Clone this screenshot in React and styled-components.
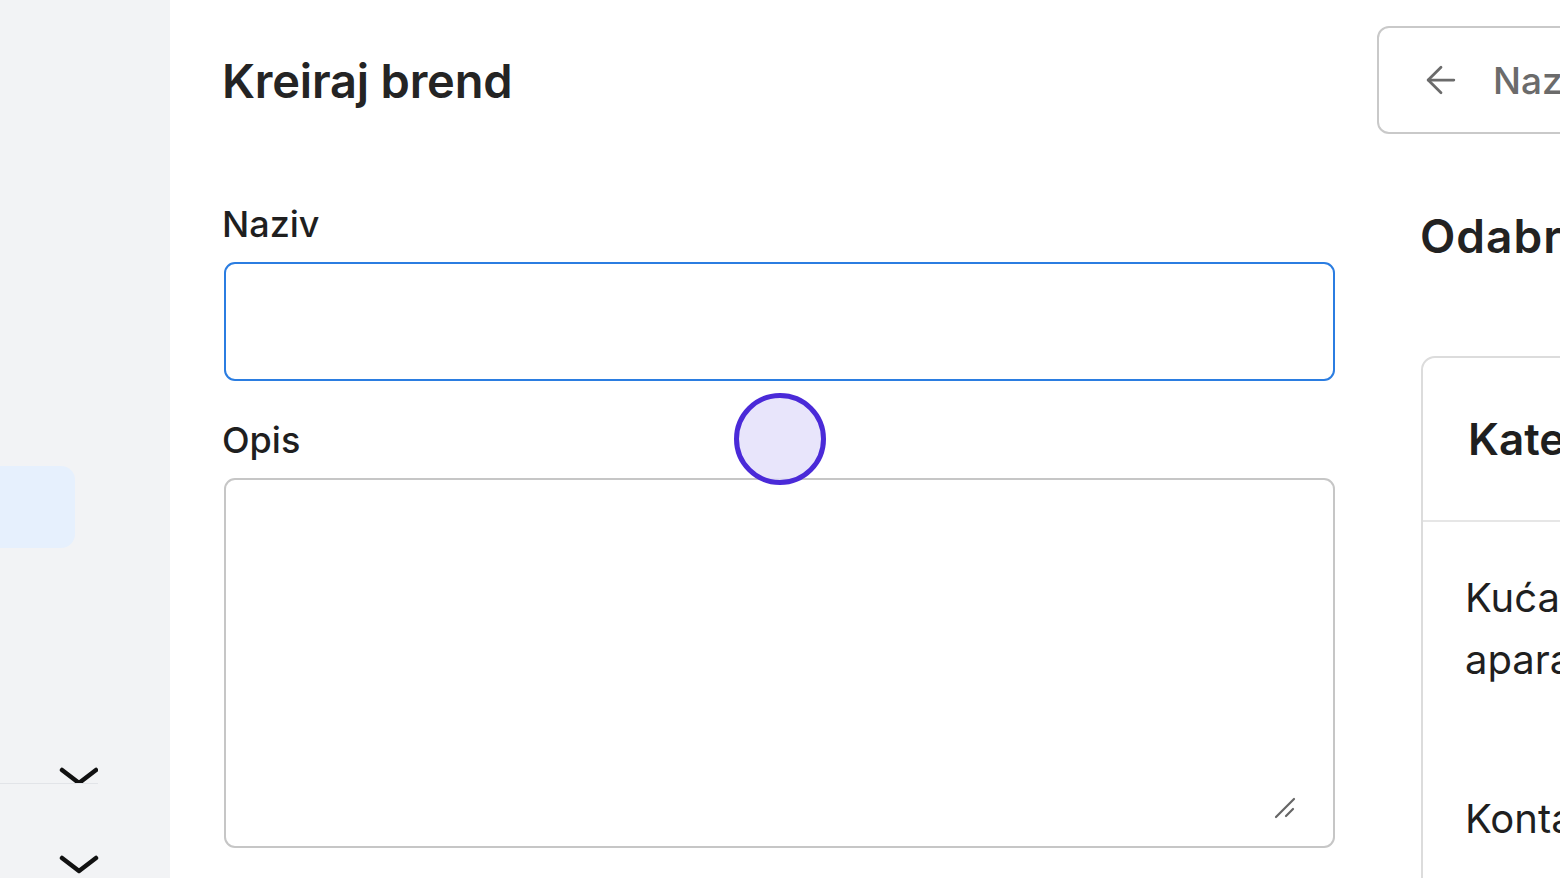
import React from "react";
import styled, { createGlobalStyle } from "styled-components";
import { ArrowLeft } from "lucide-react";

const GlobalStyle = createGlobalStyle`
  html, body {
    margin: 0;
    padding: 0;
    background: #ffffff;
    font-family: Inter, "Noto Sans", "Liberation Sans", sans-serif;
    color: #222222;
  }
  * {
    box-sizing: border-box;
  }
`;

const categories = ["Kućanski aparati", "Kontakt leće"];

const Chevron = () => (
  <svg width="40" height="20" viewBox="0 0 40 20" fill="none">
    <path d="M3 3 L20 16 L37 3" stroke="#111" strokeWidth="4.5" strokeLinecap="round" strokeLinejoin="round" />
  </svg>
);

const App = () => {
  return (
    <>
      <GlobalStyle />
      <Layout>
        <Sidebar>
          <ActiveItem />
          <GroupRow $first>
            <Chevron />
          </GroupRow>
          <GroupRow>
            <Chevron />
          </GroupRow>
        </Sidebar>

        <Main>
          <Header>
            <Title>Kreiraj brend</Title>
            <BackButton>
              <ArrowLeft size={44} strokeWidth={1.5} color="#6b6b6b" />
              <span>Nazad</span>
            </BackButton>
          </Header>

          <Body>
            <Form>
              <Label>Naziv</Label>
              <Input type="text" />
              <Label $spaced>Opis</Label>
              <TextAreaWrap>
                <TextArea />
                <Grip width="22" height="22" viewBox="0 0 22 22">
                  <path d="M2 20 L20 2" stroke="#666" strokeWidth="2.2" strokeLinecap="round" />
                  <path d="M12 19 L19 12" stroke="#666" strokeWidth="2.2" strokeLinecap="round" />
                </Grip>
              </TextAreaWrap>
            </Form>

            <Aside>
              <AsideTitle>Odabrane kategorije</AsideTitle>
              <Card>
                <CardHeader>Kategorije</CardHeader>
                {categories.map((c) => (
                  <CardItem key={c}>{c}</CardItem>
                ))}
              </Card>
            </Aside>
          </Body>
        </Main>

        <ClickMarker />
      </Layout>
    </>
  );
};

export default App;

const Layout = styled.div`
  position: relative;
  display: flex;
  width: 1560px;
  height: 878px;
  overflow: hidden;
`;

const Sidebar = styled.aside`
  flex: 0 0 170px;
  background: #f2f3f5;
  display: flex;
  flex-direction: column;
`;

const ActiveItem = styled.div`
  margin-top: 466px;
  margin-left: -20px;
  width: 95px;
  height: 82px;
  border-radius: 14px;
  background: #e6f0fd;
`;

const GroupRow = styled.div`
  width: 98px;
  display: flex;
  justify-content: flex-end;
  align-items: flex-end;
  ${({ $first }) =>
    $first
      ? `
    margin-top: 166px;
    height: 70px;
    border-bottom: 1.5px solid #e2e4e8;
    overflow: hidden;
    svg { margin-bottom: -4px; margin-right: -1px; }
  `
      : `
    padding-top: 71px;
    svg { margin-right: -1px; }
  `}
`;

const Main = styled.main`
  flex: 1;
  min-width: 0;
  padding: 26px 0 0 54px;
  overflow: hidden;
`;

const Header = styled.header`
  display: grid;
  grid-template-columns: 1111px 400px;
  column-gap: 42px;
  align-items: center;
`;

const Title = styled.h1`
  margin: 0 0 0 -2px;
  font-size: 47px;
  font-weight: 600;
  letter-spacing: -0.2px;
  color: #242424;
`;

const BackButton = styled.button`
  display: flex;
  align-items: center;
  gap: 30px;
  height: 108px;
  padding: 0 40px;
  border: 2px solid #c9c9c9;
  border-radius: 12px;
  background: #ffffff;
  font-family: inherit;
  font-size: 37px;
  font-weight: 500;
  color: #6b6b6b;
  white-space: nowrap;
`;

const Body = styled.div`
  display: grid;
  grid-template-columns: 1111px 420px;
  column-gap: 86px;
`;

const Form = styled.div`
  display: flex;
  flex-direction: column;
  padding-top: 68px;
`;

const Label = styled.label`
  display: block;
  margin-left: -2px;
  font-size: 36px;
  font-weight: 500;
  line-height: 44px;
  color: #1f1f1f;
  margin-top: ${({ $spaced }) => ($spaced ? "37px" : "0")};
  margin-bottom: 16px;
`;

const Input = styled.input`
  width: 100%;
  height: 119px;
  border: 2.5px solid #2b7de1;
  border-radius: 11px;
  outline: none;
  background: #ffffff;
`;

const TextAreaWrap = styled.div`
  position: relative;
`;

const TextArea = styled.textarea`
  display: block;
  width: 100%;
  height: 370px;
  border: 2.5px solid #c6c6c6;
  border-radius: 11px;
  outline: none;
  resize: none;
  background: #ffffff;
`;

const Grip = styled.svg`
  position: absolute;
  right: 39px;
  bottom: 29px;
`;

const Aside = styled.section`
  display: flex;
  flex-direction: column;
  padding-top: 76px;
`;

const AsideTitle = styled.h2`
  margin: 0 0 0 -1px;
  font-size: 46px;
  font-weight: 600;
  letter-spacing: 1px;
  line-height: 52px;
  color: #222222;
  white-space: nowrap;
`;

const Card = styled.div`
  margin-top: 94px;
  border: 2px solid #dcdcdc;
  border-radius: 14px;
  background: #ffffff;
`;

const CardHeader = styled.div`
  height: 164px;
  display: flex;
  align-items: center;
  padding: 0 45px;
  font-size: 44px;
  font-weight: 600;
  color: #1f1f1f;
  border-bottom: 2px solid #e6e6e6;
  white-space: nowrap;
`;

const CardItem = styled.div`
  padding: 45px 42px 52px;
  font-size: 40px;
  line-height: 62px;
  color: #1f1f1f;
  width: 340px;
`;

const ClickMarker = styled.div`
  position: absolute;
  left: 734px;
  top: 393px;
  width: 92px;
  height: 92px;
  border-radius: 50%;
  border: 5px solid #4a2ad8;
  background: rgba(228, 224, 250, 0.85);
  pointer-events: none;
`;
